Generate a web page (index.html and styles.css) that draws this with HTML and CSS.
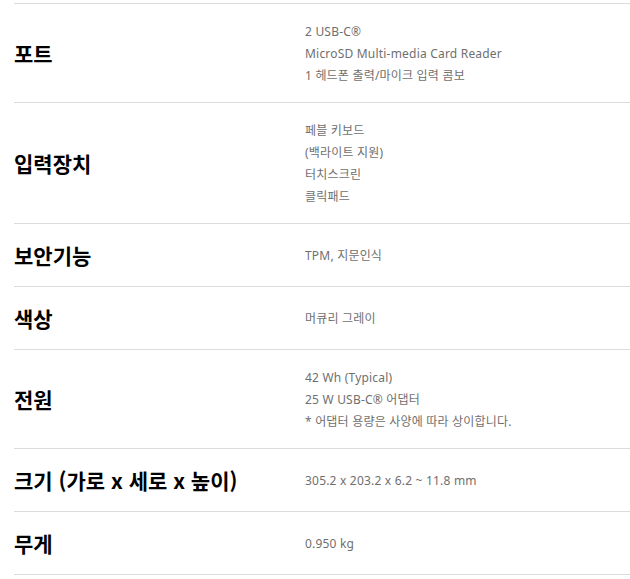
FILE: index.html
```html
<!DOCTYPE html>
<html lang="ko">
<head>
<meta charset="utf-8">
<link rel="stylesheet" href="styles.css">
</head>
<body>
<div class="specs">
  <div class="row">
    <div class="label">포트</div>
    <div class="value">
      <p>2 USB-C®</p>
      <p>MicroSD Multi-media Card Reader</p>
      <p>1 헤드폰 출력/마이크 입력 콤보</p>
    </div>
  </div>
  <div class="row">
    <div class="label">입력장치</div>
    <div class="value">
      <p>페블 키보드</p>
      <p>(백라이트 지원)</p>
      <p>터치스크린</p>
      <p>클릭패드</p>
    </div>
  </div>
  <div class="row">
    <div class="label">보안기능</div>
    <div class="value"><p>TPM, 지문인식</p></div>
  </div>
  <div class="row">
    <div class="label">색상</div>
    <div class="value"><p>머큐리 그레이</p></div>
  </div>
  <div class="row">
    <div class="label">전원</div>
    <div class="value">
      <p>42 Wh (Typical)</p>
      <p>25 W USB-C® 어댑터</p>
      <p>* 어댑터 용량은 사양에 따라 상이합니다.</p>
    </div>
  </div>
  <div class="row">
    <div class="label">크기 (가로 x 세로 x 높이)</div>
    <div class="value"><p>305.2 x 203.2 x 6.2 ~ 11.8 mm</p></div>
  </div>
  <div class="row">
    <div class="label">무게</div>
    <div class="value"><p>0.950 kg</p></div>
  </div>
</div>
</body>
</html>
```

FILE: styles.css
```css
html, body {
  margin: 0;
  padding: 0;
  background: #fff;
}
body {
  font-family: "Noto Sans", "Noto Sans CJK KR", sans-serif;
  overflow: hidden;
}
.specs {
  margin: 3px 0 0 14px;
  border-bottom: 1px solid #dcdcdc;
}
.row {
  display: grid;
  grid-template-columns: 291px 1fr;
  align-items: center;
  padding: 16px 0;
  border-top: 1px solid #dcdcdc;
}
.label {
  font-family: "Noto Sans CJK KR", "Noto Sans", sans-serif;
  font-size: 21px;
  font-weight: 700;
  line-height: 30px;
  color: #000;
}
.value p {
  margin: 0;
  font-size: 12px;
  line-height: 22px;
  color: #6f6f6f;
  letter-spacing: 0.2px;
  position: relative;
  top: 1px;
}
```
